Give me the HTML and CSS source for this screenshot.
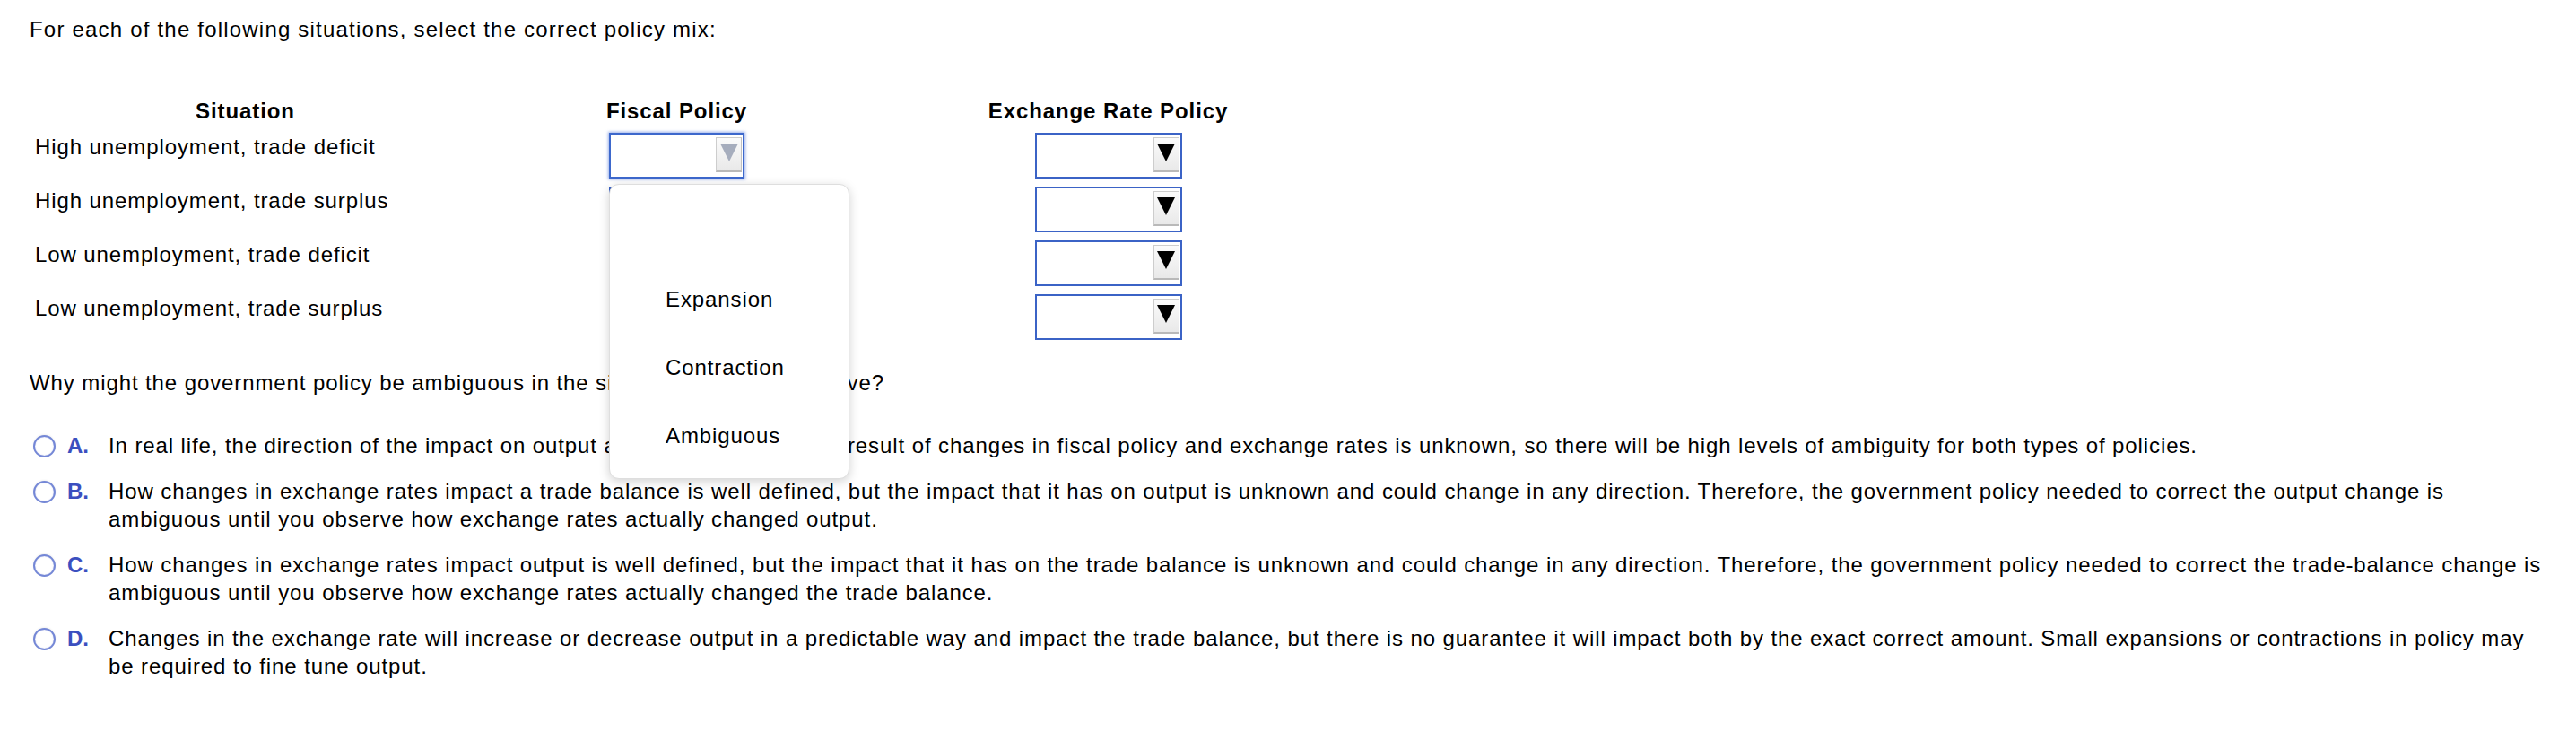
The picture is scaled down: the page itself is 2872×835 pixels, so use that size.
FILE: index.html
```html
<!DOCTYPE html>
<html lang="en">
<head>
    <meta charset="UTF-8">
    <title>Policy Mix</title>
    <link rel="stylesheet" href="styles.css">
</head>
<body>
    <div class="page">
        <p class="intro">For each of the following situations, select the correct policy mix:</p>

        <table class="mix">
            <thead>
                <tr>
                    <th>Situation</th>
                    <th>Fiscal Policy</th>
                    <th>Exchange Rate Policy</th>
                </tr>
            </thead>
            <tbody>
                <tr>
                    <td>High unemployment, trade deficit</td>
                    <td class="pick">
                        <div class="dropdown fiscal open">
                            <span class="arrow"><span class="tri"></span></span>
                            <ul class="menu">
                                <li></li>
                                <li>Expansion</li>
                                <li>Contraction</li>
                                <li>Ambiguous</li>
                            </ul>
                        </div>
                    </td>
                    <td class="pick"><div class="dropdown rate"><span class="arrow"><span class="tri"></span></span></div></td>
                </tr>
                <tr>
                    <td>High unemployment, trade surplus</td>
                    <td class="pick"><div class="dropdown fiscal"><span class="arrow"><span class="tri"></span></span></div></td>
                    <td class="pick"><div class="dropdown rate"><span class="arrow"><span class="tri"></span></span></div></td>
                </tr>
                <tr>
                    <td>Low unemployment, trade deficit</td>
                    <td class="pick"><div class="dropdown fiscal"><span class="arrow"><span class="tri"></span></span></div></td>
                    <td class="pick"><div class="dropdown rate"><span class="arrow"><span class="tri"></span></span></div></td>
                </tr>
                <tr>
                    <td>Low unemployment, trade surplus</td>
                    <td class="pick"><div class="dropdown fiscal"><span class="arrow"><span class="tri"></span></span></div></td>
                    <td class="pick"><div class="dropdown rate"><span class="arrow"><span class="tri"></span></span></div></td>
                </tr>
            </tbody>
        </table>

        <p class="question">Why might the government policy be ambiguous in the situations described above?</p>

        <div class="choices">
            <div class="choice">
                <span class="radio"></span>
                <span class="letter">A.</span>
                <span class="text">In real life, the direction of the impact on output and trade balance as a result of changes in fiscal policy and exchange rates is unknown, so there will be high levels of ambiguity for both types of policies.</span>
            </div>
            <div class="choice">
                <span class="radio"></span>
                <span class="letter">B.</span>
                <span class="text">How changes in exchange rates impact a trade balance is well defined, but the impact that it has on output is unknown and could change in any direction. Therefore, the government policy needed to correct the output change is ambiguous until you observe how exchange rates actually changed output.</span>
            </div>
            <div class="choice">
                <span class="radio"></span>
                <span class="letter">C.</span>
                <span class="text">How changes in exchange rates impact output is well defined, but the impact that it has on the trade balance is unknown and could change in any direction. Therefore, the government policy needed to correct the trade-balance change is ambiguous until you observe how exchange rates actually changed the trade balance.</span>
            </div>
            <div class="choice">
                <span class="radio"></span>
                <span class="letter">D.</span>
                <span class="text">Changes in the exchange rate will increase or decrease output in a predictable way and impact the trade balance, but there is no guarantee it will impact both by the exact correct amount. Small expansions or contractions in policy may be required to fine tune output.</span>
            </div>
        </div>
    </div>
</body>
</html>
```

FILE: styles.css
```css
body {
    margin: 0;
    background: #fff;
    color: #000;
    font-family: "Liberation Sans", Arial, sans-serif;
    font-size: 24px;
    line-height: 31px;
    letter-spacing: 0.9px;
}
.page {
    padding: 17px 33px 0;
}
.intro {
    margin: 0;
    letter-spacing: 1.2px;
}
.mix {
    margin-top: 56px;
    width: 1443px;
    table-layout: fixed;
    border-collapse: collapse;
}
.mix th {
    padding: 4px 6px 5px;
    font-weight: bold;
    text-align: center;
}
.mix td {
    height: 56px;
    padding: 4px 6px 0;
    vertical-align: top;
    text-align: left;
}
.mix td.pick {
    text-align: center;
}
.dropdown {
    display: inline-flex;
    justify-content: flex-end;
    align-items: flex-start;
    vertical-align: top;
    box-sizing: border-box;
    height: 51px;
    padding: 3px 1px 0 0;
    border: 2px solid #3b63c6;
    background: #fff;
}
.dropdown.fiscal {
    width: 151px;
}
.dropdown.rate {
    width: 164px;
}
.dropdown.open {
    position: relative;
    border-color: #3d68cc;
    box-shadow: 0 0 3px 1px rgba(70, 110, 215, 0.55);
}
.arrow {
    display: flex;
    justify-content: center;
    box-sizing: border-box;
    width: 29px;
    height: 39px;
    padding-top: 6px;
    border: 1px solid #cdcdcd;
    border-bottom: 2px solid #b9b9b9;
    border-right-color: #c2c2c2;
    background: linear-gradient(#fbfbfb, #e9e9e9);
}
.tri {
    width: 0;
    height: 0;
    border-left: 10px solid transparent;
    border-right: 10px solid transparent;
    border-top: 20px solid #000;
}
.open .tri {
    border-top-color: #a6adbd;
}
.menu {
    position: absolute;
    top: 55px;
    left: -2px;
    z-index: 5;
    box-sizing: border-box;
    width: 268px;
    margin: 0;
    padding: 14px 0 9px;
    list-style: none;
    text-align: left;
    background: #fff;
    border: 1px solid #dedede;
    border-radius: 11px;
    box-shadow: 0 3px 12px rgba(0, 0, 0, 0.18);
}
.menu li {
    height: 76px;
    line-height: 76px;
    padding-left: 62px;
}
.question {
    margin: 27px 0 0;
}
.choices {
    margin-top: 39px;
}
.choice {
    display: flex;
    align-items: flex-start;
    margin-bottom: 20px;
}
.radio {
    flex: none;
    box-sizing: border-box;
    width: 25px;
    height: 25px;
    margin: 4px 13px 0 4px;
    border: 2.5px solid #7487d6;
    border-radius: 50%;
    background: #fff;
    box-shadow: 0 -1px 2px rgba(0, 0, 0, 0.06), inset 0 0 1px rgba(60, 80, 190, 0.5);
}
.letter {
    flex: none;
    width: 46px;
    font-weight: bold;
    color: #3b4fbf;
    letter-spacing: 0;
}
.text {
    flex: 1;
}
```
